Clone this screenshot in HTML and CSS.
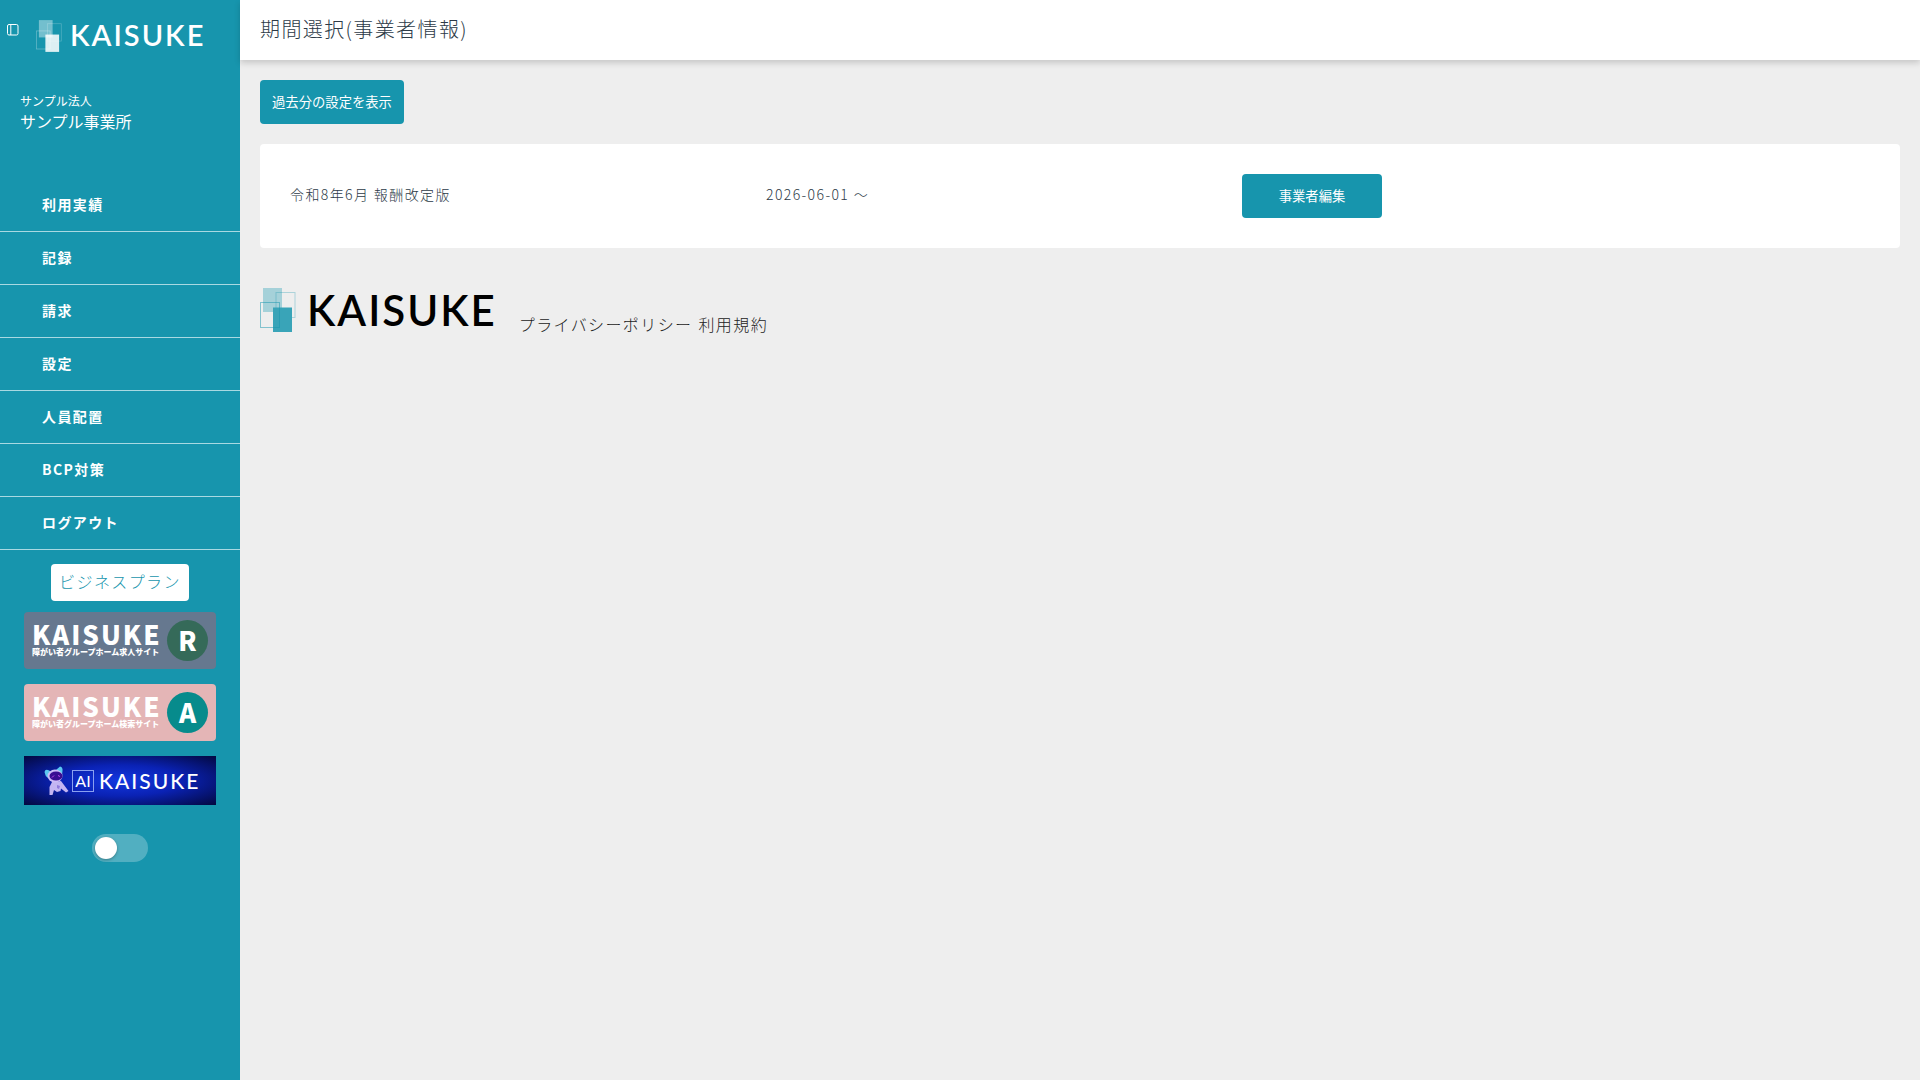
FILE: index.html
```html
<!DOCTYPE html>
<html lang="ja">

<head>
    <meta charset="UTF-8">
    <meta name="viewport" content="width=device-width, initial-scale=1.0">
    <title>期間選択(事業者情報) | KAISUKE</title>
    <link rel="stylesheet" href="styles.css">
</head>

<body>
    <!-- Sidebar -->
    <aside class="sidebar">
        <div class="sidebar-head">
            <button type="button" class="sidebar-toggle" aria-label="メニューを閉じる">
                <svg viewBox="0 0 12 12" width="12" height="12" fill="none" stroke="#fff">
                    <rect x="0.5" y="0.5" width="10.5" height="10.5" rx="1.5" />
                    <path d="M3.8 0.5v10.5" />
                </svg>
            </button>
            <a href="#" class="logo logo-white">
                <svg class="logo-mark" viewBox="0 0 36 44">
                    <rect x="4" y="0" width="19" height="24" fill="#fff" fill-opacity=".4" />
                    <rect x="16" y="5" width="19" height="24" fill="none" stroke="#fff" stroke-opacity=".25" />
                    <rect x=".5" y="15" width="19" height="25" fill="none" stroke="#fff" stroke-opacity=".35" />
                    <rect x="13" y="20" width="19" height="24" fill="#fff" fill-opacity=".85" />
                </svg>
                <span class="logo-text">KAISUKE</span>
            </a>
        </div>

        <div class="office">
            <p class="office-corp">サンプル法人</p>
            <p class="office-name">サンプル事業所</p>
        </div>

        <nav>
            <ul class="menu">
                <li><a href="#">利用実績</a></li>
                <li><a href="#">記録</a></li>
                <li><a href="#">請求</a></li>
                <li><a href="#">設定</a></li>
                <li><a href="#">人員配置</a></li>
                <li><a href="#">BCP対策</a></li>
                <li><a href="#">ログアウト</a></li>
            </ul>
        </nav>

        <div class="sidebar-foot">
            <p class="plan">ビジネスプラン</p>

            <!-- Banners -->
            <a href="#" class="banner banner-r">
                <span class="banner-copy">
                    <span class="banner-title">KAISUKE</span>
                    <span class="banner-sub">障がい者グループホーム求人サイト</span>
                </span>
                <span class="banner-mark">R</span>
            </a>
            <a href="#" class="banner banner-a">
                <span class="banner-copy">
                    <span class="banner-title">KAISUKE</span>
                    <span class="banner-sub">障がい者グループホーム検索サイト</span>
                </span>
                <span class="banner-mark">A</span>
            </a>
            <a href="#" class="banner-ai">
                <svg class="robot" viewBox="0 0 25 30" width="25" height="30">
                    <path d="M8 16L17 15L20 19L24.500 25L22 26.500L17 22.500L16.500 25L13 26L10 24L8.500 29L5.500 29L5.500 21Z" fill="#c3b5f2" />
                    <path d="M13 19l3 1-1 3-2-1z" fill="#8f7bdc" />
                    <path d="M0.500 6Q1 3 4 4L8 6L4 12Q1 10 0.500 6Z" fill="#5cc8f0" />
                    <path d="M12 4L16 0.500Q19 1 18.500 5L18 9Z" fill="#5cc8f0" />
                    <ellipse cx="11" cy="10" rx="7.500" ry="6.500" fill="#cdbcf7" />
                    <ellipse cx="12" cy="10" rx="6.500" ry="4.500" fill="#3a0e92" />
                    <path d="M8 11.500l2-2M14 9.500l2 1" stroke="#c04cf0" />
                </svg>
                <span class="ai-box">AI</span>
                <span class="ai-title">KAISUKE</span>
            </a>

            <input type="checkbox" class="switch" aria-label="表示切替">
        </div>
    </aside>

    <div class="page">
        <header class="page-head">
            <h1>期間選択(事業者情報)</h1>
        </header>

        <main class="content">
            <button type="button" class="btn">過去分の設定を表示</button>

            <div class="card">
                <p>令和8年6月 報酬改定版</p>
                <p>2026-06-01 ～</p>
                <div><button type="button" class="btn btn-wide">事業者編集</button></div>
            </div>

            <footer class="footer">
                <a href="#" class="logo logo-color">
                    <svg class="logo-mark" viewBox="0 0 36 44">
                        <rect x="3" y="0" width="19" height="24" fill="#a5d1d9" />
                        <rect x="16" y="4.500" width="19" height="25" fill="none" stroke="#1795ad" stroke-opacity=".3" />
                        <rect x="13" y="19.500" width="19" height="24.500" fill="#39a4b8" />
                        <rect x=".5" y="14.500" width="19" height="25" fill="none" stroke="#1795ad" stroke-opacity=".5" />
                    </svg>
                    <span class="logo-text">KAISUKE</span>
                </a>
                <div class="footer-links">
                    <a href="#">プライバシーポリシー</a>
                    <a href="#">利用規約</a>
                </div>
            </footer>
        </main>
    </div>
</body>

</html>
```
FILE: styles.css
```css
* {
    margin: 0;
    padding: 0;
    box-sizing: border-box;
}

body {
    display: flex;
    min-height: 100vh;
    background: #eee;
    color: #2c3a47;
    font-family: "Noto Sans CJK JP", sans-serif;
    font-size: 14px;
    font-weight: 300;
    line-height: 20px;
    letter-spacing: 0.1em;
}

a {
    color: inherit;
    text-decoration: none;
}

ul {
    list-style: none;
}

/* Sidebar */
.sidebar {
    width: 240px;
    flex-shrink: 0;
    background: #1795ad;
    color: #fff;
}

.sidebar-head {
    display: flex;
    align-items: flex-start;
    gap: 17px;
    padding: 20px 0 0 7px;
}

.sidebar-toggle {
    display: flex;
    padding-top: 4px;
    border: none;
    background: none;
    cursor: pointer;
}

/* Logo */
.logo {
    display: flex;
    align-items: center;
    font-family: Lato, sans-serif;
    font-weight: 600;
}

.logo-white {
    gap: 8px;
}

.logo-white .logo-mark {
    width: 26px;
    height: 32px;
}

.logo-white .logo-text {
    font-size: 29px;
    line-height: 30px;
    letter-spacing: 2px;
    padding-bottom: 2px;
}

.logo-color {
    gap: 11px;
    color: #000;
}

.logo-color .logo-mark {
    width: 36px;
    height: 44px;
}

.logo-color .logo-text {
    font-size: 42px;
    line-height: 44px;
    letter-spacing: 2px;
}

.office {
    padding: 39px 20px 0;
    font-weight: 400;
    letter-spacing: normal;
}

.office-corp {
    font-size: 12px;
}

.office-name {
    font-size: 16px;
}

.menu {
    padding-top: 48px;
}

.menu a {
    display: block;
    padding: 15px 42px 17px;
    border-bottom: 1px solid #a9d9e2;
    font-weight: 700;
}

.sidebar-foot {
    display: flex;
    flex-direction: column;
    align-items: center;
    padding: 14px 24px;
}

.plan {
    padding: 7px 8px 10px;
    margin-bottom: 11px;
    border-radius: 4px;
    background: #fff;
    color: #1795ad;
    font-size: 16px;
}

/* Banners */
.banner {
    display: flex;
    align-items: center;
    justify-content: space-between;
    width: 100%;
    height: 57px;
    margin-bottom: 15px;
    padding: 0 8px;
    border-radius: 4px;
    letter-spacing: normal;
    white-space: nowrap;
}

.banner-r {
    background: #66788f;
}

.banner-a {
    background: #e4b5b6;
}

.banner-copy {
    display: flex;
    flex-direction: column;
    padding-bottom: 4px;
}

.banner-title {
    font-size: 26px;
    font-weight: 900;
    line-height: 26px;
    letter-spacing: 2px;
}

.banner-sub {
    font-size: 8px;
    font-weight: 900;
    line-height: 10px;
}

.banner-mark {
    width: 41px;
    height: 41px;
    border-radius: 50%;
    background: #356a59;
    font-size: 26px;
    font-weight: 900;
    line-height: 40px;
    text-align: center;
}

.banner-a .banner-mark {
    background: #078b8c;
}

.banner-ai {
    display: flex;
    align-items: center;
    width: 100%;
    height: 49px;
    padding-left: 20px;
    background: radial-gradient(ellipse at center, #1338e0 0%, #0a22b4 45%, #03083f 100%);
    font-family: Lato, sans-serif;
    letter-spacing: normal;
}

.ai-box {
    width: 22px;
    height: 22px;
    margin: 0 5px 0 3px;
    border: 1px solid #8aa0f0;
    font-size: 16px;
    font-weight: 400;
    text-align: center;
}

.ai-title {
    font-size: 21px;
    font-weight: 500;
    letter-spacing: 2px;
}

.switch {
    appearance: none;
    width: 56px;
    height: 28px;
    margin-top: 29px;
    padding: 3px;
    border-radius: 14px;
    background: rgba(255, 255, 255, 0.25);
    cursor: pointer;
}

.switch::before {
    content: "";
    display: block;
    width: 22px;
    height: 22px;
    border-radius: 50%;
    background: #fff;
    box-shadow: 0 1px 3px rgba(0, 0, 0, 0.3);
}

.switch:checked::before {
    margin-left: auto;
}

/* Main area */
.page {
    flex: 1;
}

.page-head {
    height: 60px;
    padding: 0 20px;
    background: #fff;
    box-shadow: 0 3px 6px rgba(0, 0, 0, 0.16);
}

.page-head h1 {
    font-size: 20px;
    font-weight: 300;
    line-height: 58px;
}

.content {
    padding: 20px;
}

.btn {
    height: 44px;
    padding: 0 12px 2px;
    border: none;
    border-radius: 4px;
    background: #1795ad;
    color: #fff;
    font-family: inherit;
    cursor: pointer;
}

.btn:hover {
    opacity: 0.8;
}

.btn-wide {
    min-width: 140px;
}

.card {
    display: grid;
    grid-template-columns: 30% 30% 1fr;
    column-gap: 2px;
    align-items: center;
    margin-top: 20px;
    padding: 30px;
    border-radius: 4px;
    background: #fff;
}

.card p {
    padding-bottom: 4px;
}

.footer {
    display: flex;
    align-items: flex-end;
    gap: 22px;
    margin-top: 40px;
    color: #222;
    font-size: 16px;
}

.footer-links {
    display: flex;
    gap: 6px;
    line-height: 16px;
}
```
